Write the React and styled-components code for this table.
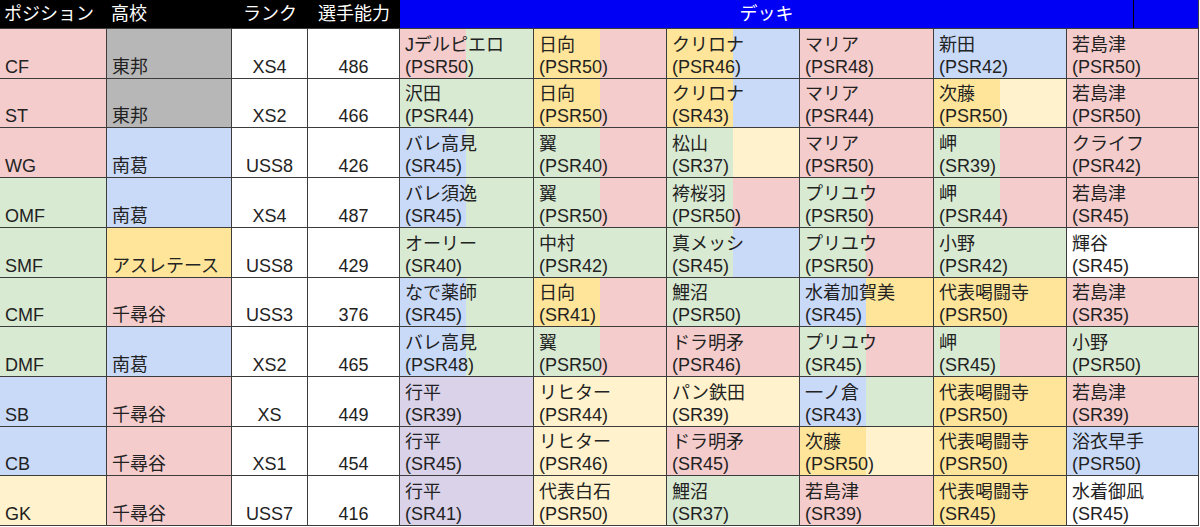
import React from "react";
import styled, { createGlobalStyle } from "styled-components";

const C = {
  P: "#f4cccc",
  G: "#d9ead3",
  B: "#c9daf8",
  Y: "#ffe599",
  L: "#fff2cc",
  V: "#d9d2e9",
  W: "#ffffff",
  Gr: "#b7b7b7",
};

const GlobalStyle = createGlobalStyle`
  html, body { margin: 0; padding: 0; background: #fff; }
  body {
    font-family: "Liberation Sans", Arial, "Noto Sans CJK JP", sans-serif;
    color: #222;
  }
`;

const Sheet = styled.div`
  display: grid;
  grid-template-columns: 106px 124px 75px 91px 133px 132px 132px 133px 132px 131px;
  grid-template-rows: 28px repeat(10, 1fr);
  gap: 1px;
  width: 1198px;
  height: 525px;
  background: #3c3c3c;
  border-right: 1px solid #3c3c3c;
  border-bottom: 1px solid #3c3c3c;
  font-size: 18px;
`;

const HeaderRow = styled.div`
  grid-column: 1 / -1;
  display: grid;
  grid-template-columns: 107px 125px 76px 92px 1fr 65px;
  background: #000;
  color: #fff;
`;

const HeadCell = styled.div`
  display: flex;
  align-items: center;
  justify-content: ${(p) => (p.$align === "center" ? "center" : "flex-start")};
  padding: 0 4px;
  white-space: nowrap;
  line-height: 22px;
`;

const DeckTitle = styled(HeadCell)`
  background: #0000f5;
  justify-content: center;
`;

const DeckTail = styled.div`
  background: #0000f5;
  border-left: 1px solid #000;
`;

const InfoCell = styled.div`
  display: flex;
  align-items: flex-end;
  justify-content: ${(p) => (p.$align === "center" ? "center" : "flex-start")};
  padding: 0 5px 0;
  background: ${(p) => p.$bg || "#fff"};
  line-height: 22px;
  white-space: nowrap;
`;

const DeckCell = styled.div`
  display: flex;
  flex-direction: column;
  justify-content: flex-end;
  padding: 0 4px 0 5px;
  background: linear-gradient(
    to right,
    ${(p) => p.$left} 0,
    ${(p) => p.$left} 50%,
    ${(p) => p.$right} 50%,
    ${(p) => p.$right} 100%
  );
  line-height: 22px;
  white-space: nowrap;
  overflow: hidden;
`;

const Line = styled.span`
  display: block;
`;

const rows = [
  {
    pos: "CF", posBg: C.P, school: "東邦", schoolBg: C.Gr, rank: "XS4", power: 486,
    deck: [
      ["Jデルピエロ", "PSR50", "P", "G"],
      ["日向", "PSR50", "Y", "P"],
      ["クリロナ", "PSR46", "Y", "B"],
      ["マリア", "PSR48", "P", "P"],
      ["新田", "PSR42", "B", "B"],
      ["若島津", "PSR50", "P", "P"],
    ],
  },
  {
    pos: "ST", posBg: C.P, school: "東邦", schoolBg: C.Gr, rank: "XS2", power: 466,
    deck: [
      ["沢田", "PSR44", "G", "G"],
      ["日向", "PSR50", "Y", "P"],
      ["クリロナ", "SR43", "Y", "B"],
      ["マリア", "PSR44", "P", "P"],
      ["次藤", "PSR50", "Y", "L"],
      ["若島津", "PSR50", "P", "P"],
    ],
  },
  {
    pos: "WG", posBg: C.P, school: "南葛", schoolBg: C.B, rank: "USS8", power: 426,
    deck: [
      ["バレ高見", "SR45", "B", "G"],
      ["翼", "PSR40", "G", "P"],
      ["松山", "SR37", "G", "L"],
      ["マリア", "PSR50", "P", "P"],
      ["岬", "SR39", "G", "P"],
      ["クライフ", "PSR42", "P", "P"],
    ],
  },
  {
    pos: "OMF", posBg: C.G, school: "南葛", schoolBg: C.B, rank: "XS4", power: 487,
    deck: [
      ["バレ須逸", "SR45", "B", "G"],
      ["翼", "PSR50", "G", "P"],
      ["袴桜羽", "PSR50", "G", "P"],
      ["プリユウ", "PSR50", "G", "P"],
      ["岬", "PSR44", "G", "P"],
      ["若島津", "SR45", "P", "P"],
    ],
  },
  {
    pos: "SMF", posBg: C.G, school: "アスレテース", schoolBg: C.Y, rank: "USS8", power: 429,
    deck: [
      ["オーリー", "SR40", "G", "G"],
      ["中村", "PSR42", "G", "G"],
      ["真メッシ", "SR45", "G", "B"],
      ["プリユウ", "PSR50", "G", "P"],
      ["小野", "PSR42", "G", "G"],
      ["輝谷", "SR45", "W", "W"],
    ],
  },
  {
    pos: "CMF", posBg: C.G, school: "千尋谷", schoolBg: C.P, rank: "USS3", power: 376,
    deck: [
      ["なで薬師", "SR45", "B", "G"],
      ["日向", "SR41", "Y", "P"],
      ["鯉沼", "PSR50", "G", "G"],
      ["水着加賀美", "SR45", "B", "Y"],
      ["代表喝闘寺", "PSR50", "Y", "Y"],
      ["若島津", "SR35", "P", "P"],
    ],
  },
  {
    pos: "DMF", posBg: C.G, school: "南葛", schoolBg: C.B, rank: "XS2", power: 465,
    deck: [
      ["バレ高見", "PSR48", "B", "G"],
      ["翼", "PSR50", "G", "P"],
      ["ドラ明矛", "PSR46", "P", "P"],
      ["プリユウ", "SR45", "G", "P"],
      ["岬", "SR45", "G", "P"],
      ["小野", "PSR50", "G", "G"],
    ],
  },
  {
    pos: "SB", posBg: C.B, school: "千尋谷", schoolBg: C.P, rank: "XS", power: 449,
    deck: [
      ["行平", "SR39", "V", "V"],
      ["リヒター", "PSR44", "L", "L"],
      ["パン鉄田", "SR39", "L", "L"],
      ["一ノ倉", "SR43", "B", "G"],
      ["代表喝闘寺", "PSR50", "Y", "Y"],
      ["若島津", "SR39", "P", "P"],
    ],
  },
  {
    pos: "CB", posBg: C.B, school: "千尋谷", schoolBg: C.P, rank: "XS1", power: 454,
    deck: [
      ["行平", "SR45", "V", "V"],
      ["リヒター", "PSR46", "L", "L"],
      ["ドラ明矛", "SR45", "P", "P"],
      ["次藤", "PSR50", "Y", "L"],
      ["代表喝闘寺", "PSR50", "Y", "Y"],
      ["浴衣早手", "PSR50", "B", "B"],
    ],
  },
  {
    pos: "GK", posBg: C.L, school: "千尋谷", schoolBg: C.P, rank: "USS7", power: 416,
    deck: [
      ["行平", "SR41", "V", "V"],
      ["代表白石", "PSR50", "L", "L"],
      ["鯉沼", "SR37", "G", "G"],
      ["若島津", "SR39", "P", "P"],
      ["代表喝闘寺", "SR45", "Y", "Y"],
      ["水着御凪", "SR45", "W", "W"],
    ],
  },
];

export default function App() {
  return (
    <>
      <GlobalStyle />
      <Sheet>
        <HeaderRow>
          <HeadCell>ポジション</HeadCell>
          <HeadCell>高校</HeadCell>
          <HeadCell $align="center">ランク</HeadCell>
          <HeadCell $align="center">選手能力</HeadCell>
          <DeckTitle>デッキ</DeckTitle>
          <DeckTail />
        </HeaderRow>
        {rows.map((r) => (
          <React.Fragment key={r.pos}>
            <InfoCell $bg={r.posBg}>{r.pos}</InfoCell>
            <InfoCell $bg={r.schoolBg}>{r.school}</InfoCell>
            <InfoCell $align="center">{r.rank}</InfoCell>
            <InfoCell $align="center">{r.power}</InfoCell>
            {r.deck.map(([name, rarity, l, rt], i) => (
              <DeckCell key={i} $left={C[l]} $right={C[rt]}>
                <Line>{name}</Line>
                <Line>({rarity})</Line>
              </DeckCell>
            ))}
          </React.Fragment>
        ))}
      </Sheet>
    </>
  );
}
